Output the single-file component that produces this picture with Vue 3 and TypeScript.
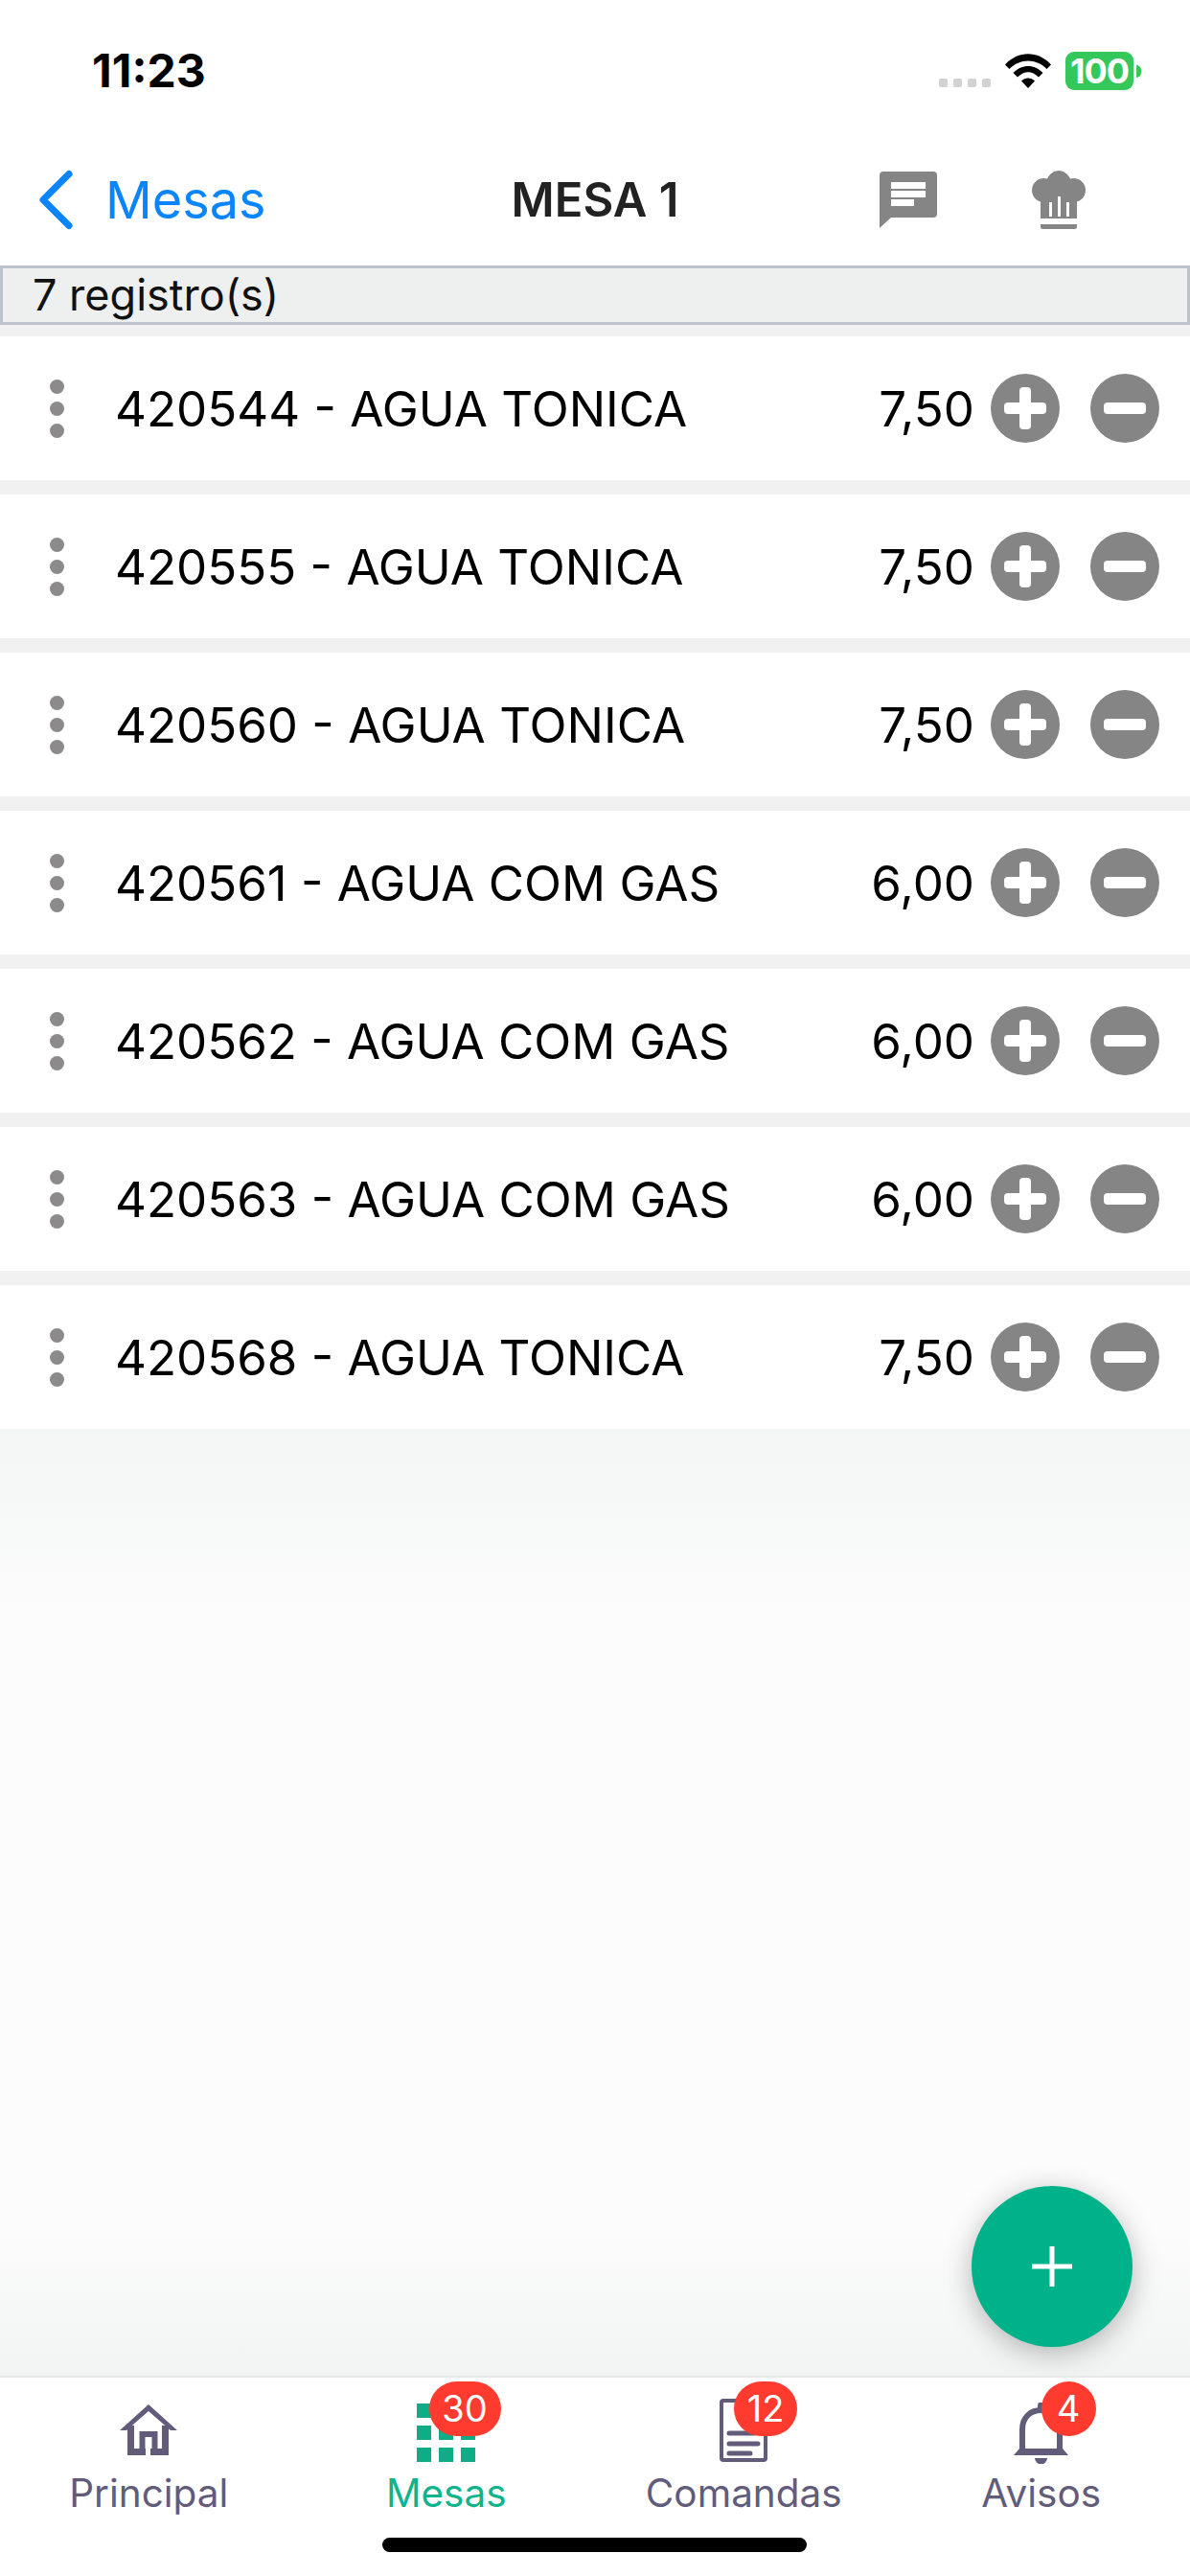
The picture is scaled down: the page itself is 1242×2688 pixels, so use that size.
<template>
  <div class="screen">
    <div class="status-bar">
      <span class="clock">11:23</span>
      <div class="status-icons">
        <div class="signal"><i v-for="n in 4" :key="n"></i></div>
        <svg class="wifi" width="48" height="36" viewBox="0 0 48 36">
          <path d="M0 11.5C13.5 -3.5 34.5 -3.5 48 11.5L43.5 16C32.5 4.5 15.5 4.5 4.5 16Z" />
          <path d="M8.5 20C17.5 10.5 30.5 10.5 39.500 20L35 24.500C27.500 17.500 20.500 17.500 13 24.500Z" />
          <path d="M17 28.500C21 24.500 27 24.500 31 28.500L24 36Z" />
        </svg>
        <div class="battery"><span>100</span></div>
        <i class="battery-nub"></i>
      </div>
    </div>

    <header class="nav">
      <div class="nav-back">
        <svg width="37" height="63" viewBox="0 0 37 63" fill="none">
          <path d="M32 4.500L5 31.500L32 58.500" stroke="#0a84ff" stroke-width="7" stroke-linecap="round" stroke-linejoin="round" />
        </svg>
        <span>Mesas</span>
      </div>
      <h1 class="nav-title">MESA 1</h1>
      <div class="nav-actions">
        <svg width="60" height="59" viewBox="0 0 60 59">
          <path fill="#858585" fill-rule="evenodd" d="M4 0H56A4 4 0 0 1 60 4V44A4 4 0 0 1 56 48H12L0 59V4A4 4 0 0 1 4 0ZM12 11V18H48V11ZM12 20V27H48V20ZM12 29V36H36V29Z" />
        </svg>
        <svg width="56" height="61" viewBox="0 0 56 61">
          <path fill="#858585" fill-rule="evenodd" d="M9 50V32.500C3.500 31 0 26 0 20.500C0 13.500 5.500 8 12.500 8C13.500 8 15 8.200 16 8.500C18.500 3.500 23 0 28 0C33 0 37.500 3.500 40 8.500C41 8.200 42.500 8 43.500 8C50.500 8 56 13.500 56 20.500C56 26 52.500 31 47 32.500V50ZM18 33V48H21V33ZM27 27V48H30V27ZM36 33V48H39V33Z" />
          <path fill="#858585" d="M9 56H47V58.500A2.500 2.500 0 0 1 44.500 61H11.500A2.500 2.500 0 0 1 9 58.500Z" />
        </svg>
      </div>
    </header>

    <div class="count-bar">7 registro(s)</div>

    <main class="content">
      <ul class="list">
        <li v-for="item in items" :key="item.id" class="row">
          <div class="dots"><i></i><i></i><i></i></div>
          <span class="row-name">{{ item.id }} - {{ item.name }}</span>
          <span class="row-value">{{ item.value }}</span>
          <button class="round-btn"><i class="bar"></i><i class="bar bar-v"></i></button>
          <button class="round-btn minus"><i class="bar"></i></button>
        </li>
      </ul>
      <div class="filler"></div>
      <button class="fab">
        <svg width="42" height="42" viewBox="0 0 42 42"><path d="M18.500 0H23.500V18.500H42V23.500H23.500V42H18.500V23.500H0V18.500H18.500Z" fill="#fff" /></svg>
      </button>
    </main>

    <nav class="tabbar">
      <div v-for="tab in tabs" :key="tab.label" class="tab" :class="{ active: tab.active }">
        <div class="tab-icon">
          <svg v-if="tab.icon === 'home'" class="home-icon" width="60" height="53" viewBox="0 0 60 53" fill="none">
            <path d="M30 0L60 27H53L30 7L7 27H0Z" fill="#625c7a" />
            <path d="M11.500 53V22M47.500 53V22M8 49.500H27M32 49.500H51" stroke="#625c7a" stroke-width="7" />
            <path d="M23.500 53V31H36.500V53" stroke="#625c7a" stroke-width="6" />
          </svg>
          <div v-else-if="tab.icon === 'grid'" class="grid-icon"><i v-for="n in 9" :key="n"></i></div>
          <svg v-else-if="tab.icon === 'doc'" class="doc-icon" width="50" height="66" viewBox="0 0 50 66" fill="none">
            <rect x="2" y="2" width="46" height="62" rx="2" stroke="#625c7a" stroke-width="4" />
            <path d="M10 36H36M10 47H40M10 57H32" stroke="#625c7a" stroke-width="5" stroke-linecap="round" />
          </svg>
          <svg v-else width="57" height="64" viewBox="0 0 57 64" fill="none">
            <path d="M9 52V28C9 16 17 8 28.500 8C40 8 48 16 48 28V52" stroke="#625c7a" stroke-width="6" />
            <path d="M25 8V3A3.500 3.500 0 0 1 32 3V8Z" fill="#625c7a" />
            <path d="M6 48H51L57 55H0Z" fill="#625c7a" />
            <path d="M22 58H35A6.500 6.500 0 0 1 22 58Z" fill="#625c7a" />
          </svg>
          <span v-if="tab.badge" class="badge" :class="tab.badgeClass">{{ tab.badge }}</span>
        </div>
        <span class="tab-label">{{ tab.label }}</span>
      </div>
      <i class="home-indicator"></i>
    </nav>
  </div>
</template>

<script setup lang="ts">
interface Item {
  id: number
  name: string
  value: string
}

interface Tab {
  label: string
  icon: string
  badge?: string
  badgeClass?: string
  active?: boolean
}

const items: Item[] = [
  { id: 420544, name: 'AGUA TONICA', value: '7,50' },
  { id: 420555, name: 'AGUA TONICA', value: '7,50' },
  { id: 420560, name: 'AGUA TONICA', value: '7,50' },
  { id: 420561, name: 'AGUA COM GAS', value: '6,00' },
  { id: 420562, name: 'AGUA COM GAS', value: '6,00' },
  { id: 420563, name: 'AGUA COM GAS', value: '6,00' },
  { id: 420568, name: 'AGUA TONICA', value: '7,50' }
]

const tabs: Tab[] = [
  { label: 'Principal', icon: 'home' },
  { label: 'Mesas', icon: 'grid', badge: '30', badgeClass: 'b-mesas', active: true },
  { label: 'Comandas', icon: 'doc', badge: '12', badgeClass: 'b-comandas' },
  { label: 'Avisos', icon: 'bell', badge: '4', badgeClass: 'b-avisos' }
]
</script>

<style>
html, body {
  margin: 0;
  background: #fff;
}
</style>

<style scoped>
.screen {
  width: 1242px;
  height: 2688px;
  display: flex;
  flex-direction: column;
  overflow: hidden;
  background: #fff;
  color: #000;
  font-family: Inter, "Liberation Sans", sans-serif;
}

i {
  display: block;
}

/* barra de status */
.status-bar {
  height: 130px;
  flex: none;
  display: flex;
  justify-content: space-between;
  box-sizing: border-box;
  padding: 54px 51px 0 96px;
}
.clock {
  font-size: 48px;
  font-weight: 700;
  line-height: 40px;
}
.status-icons {
  display: flex;
  align-items: flex-start;
}
.signal {
  display: flex;
  gap: 6px;
  margin-top: 28px;
  margin-right: 15px;
}
.signal i {
  width: 9px;
  height: 9px;
  border-radius: 2px;
  background: #d2d2d2;
}
.wifi {
  margin-top: 2px;
  margin-right: 15px;
}
.wifi path {
  fill: #000;
}
.battery {
  width: 71px;
  height: 40px;
  border-radius: 9px;
  background: #34c759;
  display: flex;
  align-items: center;
  justify-content: center;
  color: #fff;
  font-size: 36px;
  font-weight: 700;
  line-height: 40px;
  letter-spacing: -1px;
}
.battery-nub {
  width: 5px;
  height: 13px;
  margin: 14px 0 0 3px;
  border-radius: 0 6px 6px 0;
  background: #34c759;
}

/* navegacao */
.nav {
  height: 147px;
  flex: none;
  display: grid;
  grid-template-columns: 1fr auto 1fr;
  align-items: center;
  box-sizing: border-box;
  padding: 10px 109px 0 40px;
}
.nav-back {
  display: flex;
  align-items: center;
  gap: 33px;
  color: #0a84ff;
  font-size: 54px;
}
.nav-title {
  margin: 0 0 0 69px;
  font-size: 49px;
  font-weight: 600;
  color: #222;
}
.nav-actions {
  display: flex;
  justify-content: flex-end;
  align-items: center;
  gap: 99px;
}

.count-bar {
  height: 62px;
  flex: none;
  box-sizing: border-box;
  padding-left: 31px;
  border: 3px solid #bcc3cd;
  background: #eeefef;
  font-size: 45px;
  line-height: 56px;
  color: #111;
}

/* lista */
.content {
  flex: 1;
  position: relative;
  display: flex;
  flex-direction: column;
}
.list {
  list-style: none;
  margin: 0;
  padding: 12px 0 0;
  display: flex;
  flex-direction: column;
  gap: 15px;
  background: #f1f1f1;
}
.filler {
  flex: 1;
  background: linear-gradient(to bottom, #f4f5f5 0%, #fcfcfc 20%, #fcfcfc 85%, #f2f3f3 100%);
}
.row {
  height: 150px;
  display: flex;
  align-items: center;
  box-sizing: border-box;
  padding: 0 32px 0 52px;
  background: #fff;
}
.dots {
  display: flex;
  flex-direction: column;
  gap: 8px;
  margin-right: 53px;
}
.dots i {
  width: 15px;
  height: 15px;
  border-radius: 50%;
  background: #8c8a8b;
}
.row-name {
  flex: 1;
  font-size: 51px;
  white-space: nowrap;
}
.row-value {
  font-size: 51px;
  margin-right: 17px;
}
.round-btn {
  width: 72px;
  height: 72px;
  padding: 0;
  border: 0;
  border-radius: 50%;
  background: #858585;
  position: relative;
}
.round-btn.minus {
  margin-left: 32px;
}
.bar {
  position: absolute;
  left: 14px;
  top: 30px;
  width: 44px;
  height: 12px;
  border-radius: 4px;
  background: #fff;
}
.bar-v {
  left: 30px;
  top: 14px;
  width: 12px;
  height: 44px;
}

.fab {
  position: absolute;
  right: 60px;
  bottom: 30px;
  width: 168px;
  height: 168px;
  padding: 0;
  border: 0;
  border-radius: 50%;
  background: #00b28a;
  box-shadow: 0 6px 30px rgba(0, 0, 0, 0.28);
  display: flex;
  align-items: center;
  justify-content: center;
}

/* abas */
.tabbar {
  height: 209px;
  flex: none;
  position: relative;
  display: grid;
  grid-template-columns: repeat(4, 1fr);
  box-sizing: border-box;
  border-top: 2px solid #e8e8e8;
  background: #fff;
}
.tab {
  display: flex;
  flex-direction: column;
  align-items: center;
  color: #625c7a;
}
.tab.active {
  color: #10b48c;
}
.tab-icon {
  height: 90px;
  display: flex;
  align-items: flex-end;
  justify-content: center;
  position: relative;
  width: 100%;
}
.home-icon {
  margin-bottom: 9px;
}
.doc-icon {
  margin-bottom: 2px;
}
.tab-label {
  font-size: 40.5px;
  line-height: 48px;
  margin-top: 7px;
}
.grid-icon {
  display: grid;
  grid-template-columns: repeat(3, 15px);
  gap: 8px;
  margin-bottom: 2px;
}
.grid-icon i {
  height: 15px;
  background: #10ab87;
}
.badge {
  position: absolute;
  top: 4px;
  height: 57px;
  border-radius: 29px;
  background: #ff3b30;
  color: #fff;
  font-size: 38px;
  line-height: 57px;
  text-align: center;
}
.b-mesas {
  left: 137px;
  width: 75px;
}
.b-comandas {
  left: 145px;
  width: 66px;
}
.b-avisos {
  left: 155px;
  width: 57px;
}
.home-indicator {
  position: absolute;
  left: 399px;
  bottom: 25px;
  width: 443px;
  height: 15px;
  border-radius: 8px;
  background: #000;
}
</style>
